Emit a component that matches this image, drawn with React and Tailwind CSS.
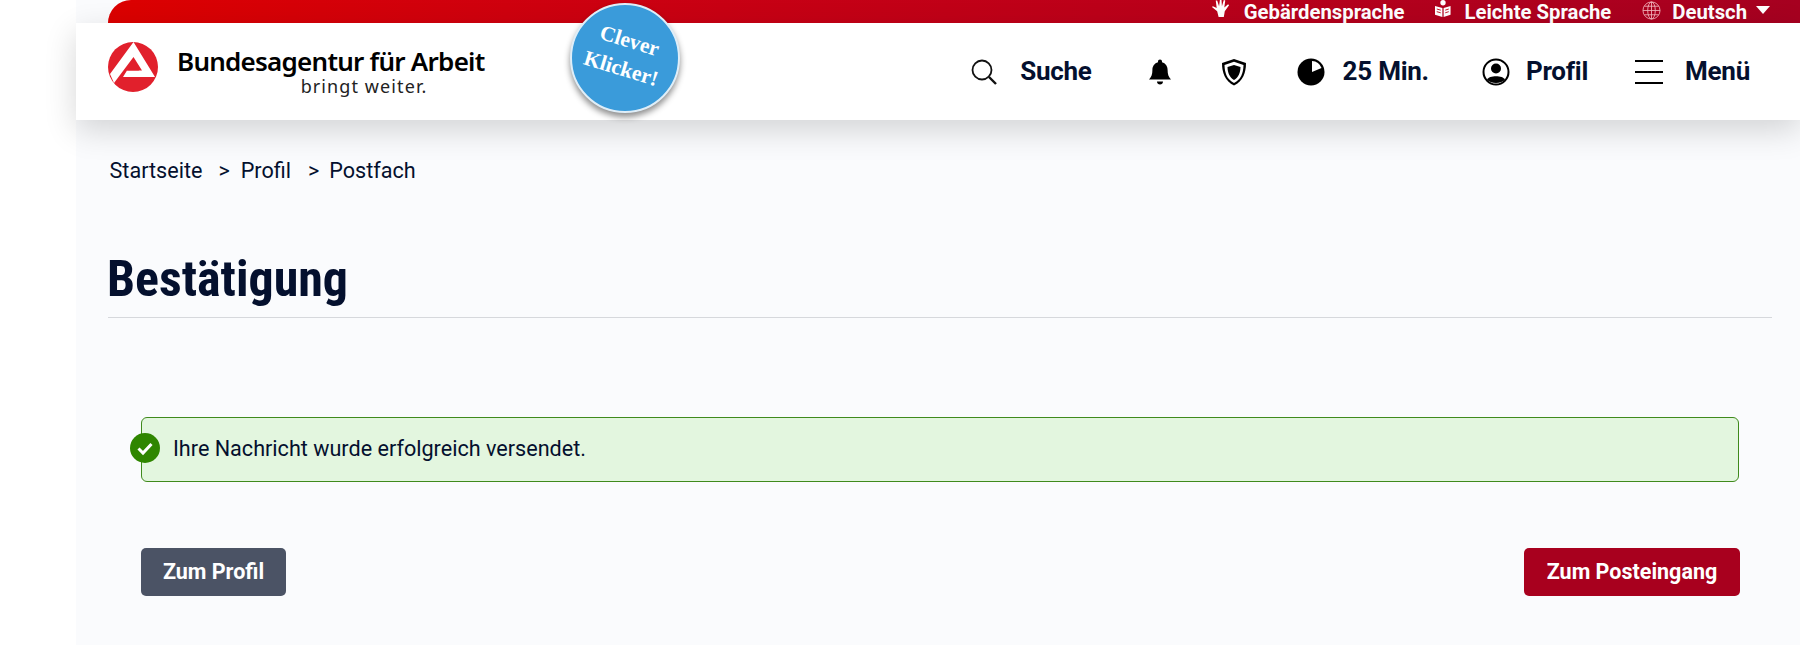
import React from 'react';

const Logo = () => (
  <svg viewBox="0 0 50 50" className="w-[50px] h-[50px] shrink-0">
    <circle cx="25" cy="25" r="25" fill="#e1202c" />
    <path d="M25.500 0 L47 35 H15 L19 28.500 H34 L25.500 15 L6 41 L2 32 Z" fill="#fff" />
    <path d="M25.500 19 L31 28.500 H19 Z" fill="#e1202c" />
  </svg>
);

const SearchIcon = () => (
  <svg viewBox="0 0 26 26" className="w-[26px] h-[26px]" fill="none" stroke="#111" strokeWidth="1.8">
    <circle cx="11" cy="11" r="9.5" />
    <path d="M18 18 L25 25" strokeWidth="2.4" />
  </svg>
);

const BellIcon = () => (
  <svg viewBox="0 0 26 28" className="w-[26px] h-[28px]" fill="#000">
    <path d="M13 1.5c1.2 0 2 .8 2 2v.8c3.6 1 5.6 4 5.6 7.7 0 4.500 1 7 3.400 9.500H2c2.400-2.500 3.400-5 3.400-9.500 0-3.700 2-6.700 5.600-7.700v-.8c0-1.200.8-2 2-2z" />
    <path d="M10 23.500h6c0 1.800-1.300 3-3 3s-3-1.200-3-3z" />
  </svg>
);

const ShieldIcon = () => (
  <svg viewBox="0 0 26 28" className="w-[26px] h-[28px]">
    <path d="M13 1 L25 5 C25 15 22 23 13 27.500 C4 23 1 15 1 5 Z" fill="#000" />
    <path d="M13 3.800 L22.500 7 C22.300 15 20 21.500 13 25 C6 21.500 3.700 15 3.500 7 Z" fill="#fff" />
    <path d="M13 7 L19.500 9 C19.300 15 17.500 19.500 13 22 C8.500 19.500 6.700 15 6.500 9 Z" fill="#000" />
  </svg>
);

const PieIcon = () => (
  <svg viewBox="0 0 28 28" className="w-[28px] h-[28px]">
    <circle cx="14" cy="14" r="13.500" fill="#000" />
    <path d="M15 3 A11 11 0 0 1 24.500 10 L15 14 Z" fill="#fff" />
  </svg>
);

const ProfileIcon = () => (
  <svg viewBox="0 0 28 28" className="w-[28px] h-[28px]">
    <circle cx="14" cy="14" r="12.500" fill="#fff" stroke="#000" strokeWidth="2" />
    <circle cx="14" cy="10.500" r="5" fill="#000" />
    <path d="M5 21.500 C7 17 21 17 23 21.500 C20 26 8 26 5 21.500 Z" fill="#000" />
  </svg>
);

const MenuIcon = () => (
  <div className="flex flex-col gap-[9px] w-[28px]">
    <span className="h-[2px] bg-black" />
    <span className="h-[2px] bg-black" />
    <span className="h-[2px] bg-black" />
  </div>
);

const HandIcon = () => (
  <svg viewBox="0 0 20 20" className="w-[19px] h-[19px] -mt-[6px]" fill="#fff">
    <path d="M8 19 L6.500 13 L1 8.500 L2 7.500 L6 9.500 L5 1.500 L6.500 1.500 L8.500 7.500 L9.500 0 L11 0 L11.500 7.500 L13.500 1 L15 1.500 L14 9 L18 5.500 L19 6.500 L14.500 13 L13.500 19 Z" />
  </svg>
);

const BookIcon = () => (
  <svg viewBox="0 0 18 20" className="w-[16px] h-[18px] -mt-[5px]" fill="#fff">
    <circle cx="9" cy="3" r="3" />
    <path d="M0 6.500 L8.300 9 V19 L0 16.500 Z M17.500 6.500 L9.700 9 V19 L17.500 16.500 Z" />
    <path d="M2 10 L6.500 11.300 M2 13 L6.500 14.300 M15.500 10 L11.500 11.300 M15.500 13 L11.500 14.300" stroke="#c00012" strokeWidth="1" />
  </svg>
);

const GlobeIcon = () => (
  <svg viewBox="0 0 20 20" className="w-[19px] h-[19px] -mt-[3px]" fill="none" stroke="#f3b6bd" strokeWidth="0.9">
    <circle cx="10" cy="10" r="9" />
    <ellipse cx="10" cy="10" rx="4" ry="9" />
    <path d="M10 1 V19 M1 10 H19 M2.500 5.500 H17.500 M2.500 14.500 H17.500" />
  </svg>
);

const CheckCircle = () => (
  <svg viewBox="0 0 30 30" className="absolute -left-[12px] top-[15px] w-[30px] h-[30px]">
    <circle cx="15" cy="15" r="15" fill="#2f8600" />
    <path d="M8.500 15.500 L13 20 L21.500 11" fill="none" stroke="#fff" strokeWidth="3" />
  </svg>
);

const TopLink = ({ icon, label, className }) => (
  <div className={`flex items-center ${className}`}>
    {icon}
    <span className="text-white font-bold text-[20.300px] leading-[23px] pt-[2px] whitespace-nowrap">{label}</span>
  </div>
);

const NavItem = ({ icon, label, gap, className }) => (
  <div className={`flex items-center ${className}`}>
    {icon}
    {label && <span className={`text-[26px] font-bold text-[#04102e] tracking-[-0.25px] whitespace-nowrap ${gap}`}>{label}</span>}
  </div>
);

const App = () => {
  return (
    <div className="h-[645px] overflow-hidden bg-white font-['Roboto',sans-serif]">
      <div className="ml-[76px] h-full bg-[#fafbfd] relative">
        {/* top bar */}
        <div className="ml-[32px] h-[23px] rounded-tl-[40px] bg-gradient-to-r from-[#dc0000] to-[#a60020] flex justify-end items-center pr-[30px]">
          <TopLink icon={<HandIcon />} label="Gebärdensprache" className="gap-[14px]" />
          <TopLink icon={<BookIcon />} label="Leichte Sprache" className="ml-[31px] gap-[13px]" />
          <TopLink icon={<GlobeIcon />} label="Deutsch" className="ml-[31px] gap-[11px]" />
          <span className="ml-[9px] w-0 h-0 -mt-[4px] border-x-[7px] border-x-transparent border-t-[8px] border-t-white" />
        </div>

        {/* header */}
        <header className="h-[97px] bg-white shadow-[0_10px_30px_rgba(0,0,0,0.16)] flex items-center pl-[32px] pr-[50px] relative">
          <div className="flex items-center -mt-[10px]">
            <Logo />
            <div className="ml-[19px] mt-[10px] font-['Noto_Sans',sans-serif] text-black">
              <div className="text-[26px] leading-[28px] font-semibold tracking-[-0.75px] whitespace-nowrap">Bundesagentur für Arbeit</div>
              <div className="text-[18px] leading-[22px] tracking-[1.1px] text-right pr-[57px] text-[#222]">bringt weiter.</div>
            </div>
          </div>
          <nav className="ml-auto flex items-center">
            <NavItem icon={<SearchIcon />} label="Suche" gap="ml-[23px]" />
            <NavItem icon={<BellIcon />} className="ml-[55px]" />
            <NavItem icon={<ShieldIcon />} className="ml-[48px]" />
            <NavItem icon={<PieIcon />} label="25 Min." gap="ml-[18px]" className="ml-[50px]" />
            <NavItem icon={<ProfileIcon />} label="Profil" gap="ml-[16px]" className="ml-[53px]" />
            <NavItem icon={<MenuIcon />} label="Menü" gap="ml-[22px]" className="ml-[47px]" />
          </nav>
        </header>

        {/* sticker */}
        <div className="absolute left-[494px] top-[3px] w-[110px] h-[110px] rounded-full bg-[#3a9bda] border-2 border-[#dfeef8] shadow-[0_4px_6px_rgba(0,0,0,0.45)] flex items-center justify-center">
          <div className="-mt-[6px] rotate-[17deg] text-center text-white font-bold font-['Liberation_Serif',serif] text-[21.500px] leading-[29px]">
            <div>Clever</div>
            <div>Klicker!</div>
          </div>
        </div>

        <main className="pl-[32px] pr-[28px]">
          <div className="pt-[37px] pl-[1.500px] flex items-center text-[21.600px] leading-[28px] text-[#04102e]">
            <span>Startseite</span>
            <span className="ml-[16px]">&gt;</span>
            <span className="ml-[11px]">Profil</span>
            <span className="ml-[17px]">&gt;</span>
            <span className="ml-[10px]">Postfach</span>
          </div>

          <h1 className="mt-[62px] pb-[6px] border-b border-[#d6d8dc] text-[50px] leading-[64px] font-bold text-[#04102e] -indent-[1px] [font-stretch:75%]">
            Bestätigung
          </h1>

          <div className="mt-[99px] ml-[33px] mr-[33px] h-[65px] relative rounded-[6px] border border-[#3f8a1c] bg-[#e3f6df] flex items-center pl-[31px]">
            <CheckCircle />
            <span className="text-[21.600px] text-[#04102e]">Ihre Nachricht wurde erfolgreich versendet.</span>
          </div>

          <div className="mt-[66px] ml-[33px] mr-[32px] flex justify-between">
            <button className="h-[48px] w-[145px] rounded-[5px] bg-[#4b5365] text-white text-[21.500px] font-bold">Zum Profil</button>
            <button className="h-[48px] w-[216px] rounded-[5px] bg-[#a8001e] text-white text-[21.500px] font-bold">Zum Posteingang</button>
          </div>
        </main>
      </div>
    </div>
  );
};

export default App;
